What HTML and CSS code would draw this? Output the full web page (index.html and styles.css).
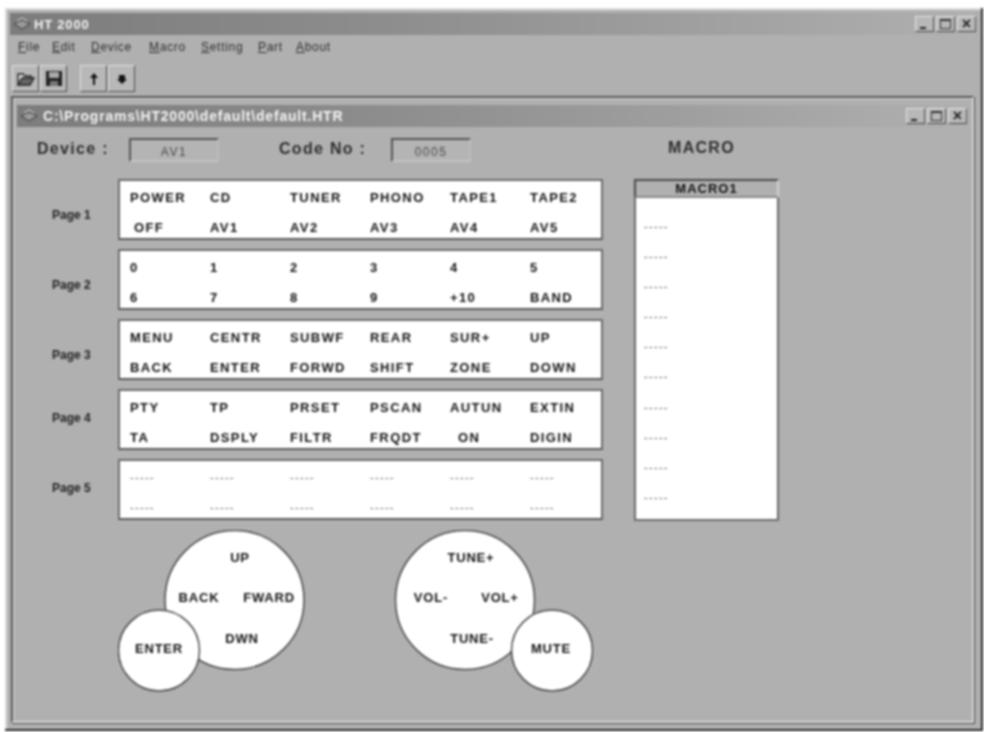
FILE: index.html
```html
<!DOCTYPE html>
<html lang="en">
<head>
    <meta charset="UTF-8">
    <meta name="viewport" content="width=device-width, initial-scale=1.0">
    <title>HT 2000</title>
    <link rel="stylesheet" href="styles.css">
</head>
<body>

<div class="app">
    <div class="titlebar">
        <svg class="app-icon" width="18" height="14" viewBox="0 0 18 14"><path d="M1 7 L9 3 L17 7 L9 12 Z" fill="#9a9a9a" stroke="#3a3a3a"/><path d="M4 4 L9 1 L14 4" fill="none" stroke="#e0e0e0"/></svg>
        <span class="title-text main-title">HT 2000</span>
        <div class="win-buttons">
            <div class="win-btn"><span class="min-mark"></span></div>
            <div class="win-btn"><span class="max-mark"></span></div>
            <div class="win-btn close-btn"><span>×</span></div>
        </div>
    </div>

    <div class="menu">
        <span class="m-file"><u>F</u>ile</span>
        <span class="m-edit"><u>E</u>dit</span>
        <span class="m-device"><u>D</u>evice</span>
        <span class="m-macro"><u>M</u>acro</span>
        <span class="m-setting"><u>S</u>etting</span>
        <span class="m-part"><u>P</u>art</span>
        <span class="m-about"><u>A</u>bout</span>
    </div>

    <div class="toolbar">
        <div class="tool">
            <svg width="20" height="16" viewBox="0 0 20 16"><path d="M2 14 V3 H7 L9 5 H15 V7" fill="#ddd" stroke="#222" stroke-width="1.4"/><path d="M2 14 L6 7 H18 L14 14 Z" fill="#666" stroke="#222" stroke-width="1.4"/></svg>
        </div>
        <div class="tool">
            <svg width="18" height="17" viewBox="0 0 18 17"><rect x="1" y="1" width="16" height="15" fill="#222"/><rect x="4" y="2" width="10" height="6" fill="#aaa"/><rect x="5" y="11" width="8" height="5" fill="#777"/></svg>
        </div>
        <div class="tool tool-first">
            <svg width="12" height="14" viewBox="0 0 12 14"><path d="M6 1 L10 6 H7 V13 H5 V6 H2 Z" fill="#111"/></svg>
        </div>
        <div class="tool">
            <svg width="12" height="14" viewBox="0 0 12 14"><path d="M3 3 H9 V7 H11 L6 12 L1 7 H3 Z" fill="#111"/></svg>
        </div>
    </div>

    <div class="mdi">
        <div class="titlebar child-title">
            <svg class="app-icon" width="18" height="14" viewBox="0 0 18 14"><path d="M1 7 L9 3 L17 7 L9 12 Z" fill="#9a9a9a" stroke="#3a3a3a"/><path d="M4 4 L9 1 L14 4" fill="none" stroke="#e0e0e0"/></svg>
            <span class="title-text child-text">C:\Programs\HT2000\default\default.HTR</span>
            <div class="win-buttons child-buttons">
                <div class="win-btn"><span class="min-mark"></span></div>
                <div class="win-btn"><span class="max-mark"></span></div>
                <div class="win-btn close-btn"><span>×</span></div>
            </div>
        </div>

        <div class="doc">
            <div class="info-row">
                <span class="info-label device-label">Device :</span>
                <div class="field device-field">AV1</div>
                <span class="info-label code-label">Code No :</span>
                <div class="field code-field">0005</div>
                <span class="info-label macro-label">MACRO</span>
            </div>

            <div class="main">
                <div class="pages">
                    <div class="page-row">
                        <div class="page-label">Page 1</div>
                        <div class="panel">
                            <span>POWER</span><span>CD</span><span>TUNER</span><span>PHONO</span><span>TAPE1</span><span>TAPE2</span>
                            <span class="nudge-s">OFF</span><span>AV1</span><span>AV2</span><span>AV3</span><span>AV4</span><span>AV5</span>
                        </div>
                    </div>
                    <div class="page-row">
                        <div class="page-label">Page 2</div>
                        <div class="panel">
                            <span>0</span><span>1</span><span>2</span><span>3</span><span>4</span><span>5</span>
                            <span>6</span><span>7</span><span>8</span><span>9</span><span>+10</span><span>BAND</span>
                        </div>
                    </div>
                    <div class="page-row">
                        <div class="page-label">Page 3</div>
                        <div class="panel">
                            <span>MENU</span><span>CENTR</span><span>SUBWF</span><span>REAR</span><span>SUR+</span><span>UP</span>
                            <span>BACK</span><span>ENTER</span><span>FORWD</span><span>SHIFT</span><span>ZONE</span><span>DOWN</span>
                        </div>
                    </div>
                    <div class="page-row">
                        <div class="page-label label-high">Page 4</div>
                        <div class="panel">
                            <span>PTY</span><span>TP</span><span>PRSET</span><span>PSCAN</span><span>AUTUN</span><span>EXTIN</span>
                            <span>TA</span><span>DSPLY</span><span>FILTR</span><span>FRQDT</span><span class="nudge-l">ON</span><span>DIGIN</span>
                        </div>
                    </div>
                    <div class="page-row">
                        <div class="page-label label-high">Page 5</div>
                        <div class="panel empty">
                            <span>-----</span><span>-----</span><span>-----</span><span>-----</span><span>-----</span><span>-----</span>
                            <span>-----</span><span>-----</span><span>-----</span><span>-----</span><span>-----</span><span>-----</span>
                        </div>
                    </div>
                </div>

                <div class="macro">
                    <div class="macro-head">MACRO1</div>
                    <div class="macro-list">
                        <div>-----</div><div>-----</div><div>-----</div><div>-----</div><div>-----</div>
                        <div>-----</div><div>-----</div><div>-----</div><div>-----</div><div>-----</div>
                    </div>
                </div>
            </div>

            <svg class="pads" width="480" height="164" viewBox="118 530 480 164">
                <circle class="pad" cx="234.5" cy="600" r="69.5"/>
                <circle class="pad" cx="159" cy="650.5" r="40.5"/>
                <circle class="pad" cx="465" cy="600" r="69.5"/>
                <circle class="pad" cx="552" cy="650.5" r="40.5"/>
                <text x="240" y="562">UP</text>
                <text x="199" y="602">BACK</text>
                <text x="269" y="602">FWARD</text>
                <text x="242" y="643">DWN</text>
                <text x="159" y="653">ENTER</text>
                <text x="471" y="562">TUNE+</text>
                <text x="431" y="602">VOL-</text>
                <text x="500" y="602">VOL+</text>
                <text x="472" y="643">TUNE-</text>
                <text x="551" y="653">MUTE</text>
            </svg>
        </div>
    </div>
</div>

</body>
</html>
```

FILE: styles.css
```css
html, body {
    margin: 0;
    padding: 0;
    background: #fff;
}

body {
    height: 732px;
    overflow: hidden;
}

/* the reference is a soft, scanned looking picture */
.app {
    box-sizing: border-box;
    width: 978px;
    height: 723px;
    margin: 8px 0 0 5px;
    padding: 5px 4px 4px 5px;
    display: flex;
    flex-direction: column;
    background: #b0b0b0;
    border-right: 2px solid #2e2e2e;
    border-bottom: 2px solid #2a2a2a;
    box-shadow: inset 2px 2px 0 #dcdcdc;
    font-family: "Liberation Sans", Arial, sans-serif;
    filter: blur(0.8px);
}

.titlebar {
    flex: none;
    height: 22px;
    display: flex;
    align-items: center;
    padding-left: 3px;
    background: linear-gradient(90deg, #7c7c7c 0%, #8e8e8e 40%, #b0b0b0 100%);
}

.app-icon {
    flex: none;
}

.title-text {
    color: #f4f4f4;
    font-weight: bold;
    white-space: nowrap;
}

.main-title {
    margin-left: 3px;
    font-size: 13px;
    letter-spacing: 0.8px;
}

.child-text {
    margin-left: 5px;
    font-size: 14px;
    letter-spacing: 0.8px;
}

.win-buttons {
    margin-left: auto;
    margin-right: 1px;
    display: flex;
    gap: 2px;
}

.child-buttons {
    margin-right: 2px;
}

.win-btn {
    box-sizing: border-box;
    width: 19px;
    height: 16px;
    background: #b8b8b8;
    border: 1px solid;
    border-color: #e4e4e4 #555 #444 #e4e4e4;
    display: flex;
    align-items: center;
    justify-content: center;
}

.min-mark {
    align-self: flex-end;
    width: 6px;
    height: 2px;
    margin-bottom: 2px;
    margin-right: 4px;
    background: #222;
}

.max-mark {
    width: 9px;
    height: 7px;
    border: 1px solid #333;
    border-top-width: 2px;
}

.close-btn span {
    font-size: 16px;
    font-weight: bold;
    line-height: 14px;
    color: #222;
}

.menu {
    flex: none;
    height: 25px;
    position: relative;
    font-size: 12px;
    line-height: 24px;
    letter-spacing: 0.7px;
    color: #2e2e2e;
}

.menu span {
    position: absolute;
    top: 0;
}

.m-file { left: 8px; }
.m-edit { left: 42px; }
.m-device { left: 81px; }
.m-macro { left: 139px; }
.m-setting { left: 191px; }
.m-part { left: 248px; }
.m-about { left: 286px; }

.toolbar {
    flex: none;
    height: 27px;
    margin-top: 5px;
    display: flex;
    gap: 1px;
    padding-left: 2px;
}

.tool {
    box-sizing: border-box;
    width: 27px;
    height: 27px;
    display: flex;
    align-items: center;
    justify-content: center;
    background: #b8b8b8;
    border: 1px solid;
    border-color: #e0e0e0 #4a4a4a #4a4a4a #e0e0e0;
}

.tool-first {
    margin-left: 12px;
}

.mdi {
    flex: 1;
    margin: 4px 3px 2px 1px;
    padding: 7px 2px 0 4px;
    display: flex;
    flex-direction: column;
    border: 2px solid;
    border-color: #555 #d8d8d8 #d8d8d8 #555;
    box-shadow: 1px 1px 0 #444, inset 1px 1px 0 #ddd;
}

.child-title {
    margin-right: 1px;
}

.doc {
    flex: 1;
    padding-top: 11px;
}

.info-row {
    height: 24px;
    display: flex;
    align-items: center;
    color: #2e2e2e;
}

.info-label {
    font-size: 16px;
    font-weight: bold;
    letter-spacing: 1.3px;
    white-space: nowrap;
    padding-bottom: 2px;
}

.device-label {
    margin-left: 20px;
    width: 92px;
}

.code-label {
    margin-left: 60px;
    width: 112px;
}

.macro-label {
    margin-left: 197px;
    padding-bottom: 4px;
}

.field {
    box-sizing: border-box;
    height: 24px;
    display: flex;
    align-items: center;
    justify-content: center;
    font-size: 12px;
    letter-spacing: 1.5px;
    padding-top: 3px;
    background: #b4b4b4;
    color: #4a4a4a;
    border: 2px solid;
    border-color: #555 #bcbcbc #c4c4c4 #555;
}

.device-field { width: 90px; }
.code-field { width: 80px; }

.main {
    margin-top: 17px;
    display: flex;
}

.pages {
    display: flex;
    flex-direction: column;
    gap: 9px;
}

.page-row {
    display: flex;
    align-items: center;
}

.page-label {
    width: 101px;
    padding: 10px 0 0 35px;
    box-sizing: border-box;
    font-size: 12px;
    font-weight: bold;
    color: #222;
}

.page-label.label-high {
    padding: 0 0 4px 35px;
}

.panel {
    box-sizing: border-box;
    width: 485px;
    height: 61px;
    padding: 9px 0 4px 10px;
    display: grid;
    grid-template-columns: repeat(6, 80px);
    grid-template-rows: 16px 16px;
    row-gap: 14px;
    background: #fff;
    border: 2px solid #6a6a6a;
    border-bottom-color: #5a5a5a;
    font-size: 13px;
    font-weight: bold;
    line-height: 16px;
    letter-spacing: 1.4px;
    color: #111;
    white-space: nowrap;
}

.panel.empty {
    padding-top: 8px;
    font-weight: normal;
    font-size: 11px;
    letter-spacing: 1.3px;
    color: #555;
}

.nudge-s {
    padding-left: 4px;
}

.nudge-l {
    padding-left: 8px;
}

.macro {
    box-sizing: border-box;
    width: 145px;
    height: 342px;
    margin-left: 31px;
    display: flex;
    flex-direction: column;
}

.macro-head {
    box-sizing: border-box;
    height: 19px;
    flex: none;
    text-align: center;
    font-size: 13px;
    font-weight: bold;
    line-height: 16px;
    letter-spacing: 1px;
    color: #111;
    background: #b0b0b0;
    border: 2px solid;
    border-color: #4a4a4a #d0d0d0 #888 #4a4a4a;
}

.macro-list {
    flex: 1;
    box-sizing: border-box;
    padding: 13px 0 0 8px;
    background: #fff;
    border: 2px solid #6a6a6a;
    border-top: none;
    font-size: 11px;
    letter-spacing: 1.3px;
    color: #555;
}

.macro-list div {
    height: 30.1px;
    line-height: 30px;
}

.pads {
    display: block;
    margin: 9px 0 0 101px;
}

.pad {
    fill: #fff;
    stroke: #4a4a4a;
    stroke-width: 1.5;
}

.pads text {
    font-size: 13px;
    font-weight: bold;
    letter-spacing: 0.8px;
    fill: #111;
    text-anchor: middle;
}
```
